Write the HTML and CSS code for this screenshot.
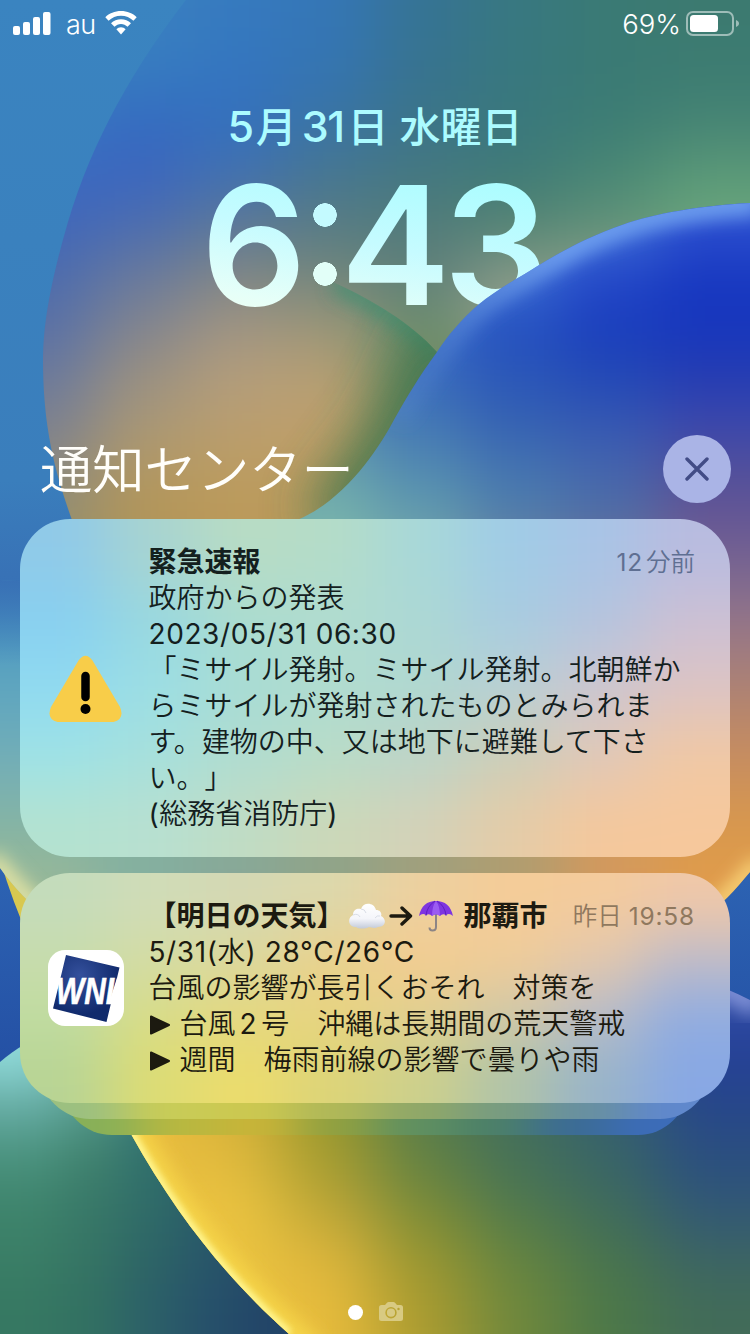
FILE: index.html
```html
<!DOCTYPE html>
<html lang="ja">
<head>
<meta charset="utf-8">
<title>通知センター</title>
<link rel="stylesheet" href="styles.css">
</head>
<body>
<main class="screen">
  <svg class="wallpaper wallpaper-back" viewBox="0 0 750 1334" aria-hidden="true">
    <defs>
      <filter id="glow" x="-30%" y="-30%" width="160%" height="160%"><feGaussianBlur stdDeviation="9"/></filter>
      <filter id="glow-wide" x="-60%" y="-60%" width="220%" height="220%"><feGaussianBlur stdDeviation="26"/></filter>
      <linearGradient id="sky" x1="0" y1="0" x2="0" y2="1">
        <stop offset="0" stop-color="#3a84c0"/><stop offset=".36" stop-color="#3a7ebc"/><stop offset=".43" stop-color="#3872b6"/><stop offset=".66" stop-color="#2c62b2"/><stop offset=".8" stop-color="#2450a4"/>
      </linearGradient>
      <clipPath id="upper"><path d="M186 0C135 66 92 140 68 222C50 284 43 325 43 360C43 420 52 465 72 520L120 640H750V0Z"/></clipPath>
      <clipPath id="disc"><path d="M0 250H270C300 262 320 274 335 283C372 300 410 322 437 352L445 700H0Z"/></clipPath>
      <clipPath id="gold"><path d="M0 860C30 960 80 1040 131 1134C180 1222 232 1283 289 1334H750V1000C720 984 680 972 640 960L500 860Z"/></clipPath>
      <clipPath id="teal"><path d="M0 1062C30 1036 70 1020 110 1020L300 1334H0Z"/></clipPath>
    </defs>
    <rect width="750" height="1334" fill="url(#sky)"/>
    <g clip-path="url(#upper)">
      <g data-mesh="upper"></g>
      <g clip-path="url(#disc)">
        <path d="M335 283C372 300 410 322 437 352" fill="none" stroke="#429070" stroke-width="20" filter="url(#glow)" opacity=".75"/>
        <path d="M450 330L405 430L330 530" fill="none" stroke="#34724c" stroke-width="64" filter="url(#glow-wide)" opacity=".8"/>
      </g>
    </g>
    <g clip-path="url(#teal)">
      <g data-mesh="teal"></g>
    </g>
    <g clip-path="url(#gold)">
      <g data-mesh="gold"></g>
      <path d="M60 1006C84 1050 108 1092 131 1134C180 1222 232 1283 289 1334L310 1352" fill="none" stroke="#f6d548" stroke-width="32" filter="url(#glow)"/>
      <path d="M60 1006C84 1050 108 1092 131 1134C180 1222 232 1283 289 1334" fill="none" stroke="#fff690" stroke-width="9" class="edge"/>
      <path d="M640 950C690 970 725 985 760 1006" fill="none" stroke="#7f90d6" stroke-width="26" filter="url(#glow)"/>
    </g>
  </svg>

  <svg class="wallpaper wallpaper-front" viewBox="0 0 750 1334" aria-hidden="true">
    <defs>
      <clipPath id="wave"><path d="M750 203C700 206 655 213 622 225C590 236 560 252 536 267C515 280 495 291 478 305C462 319 448 335 437 352C418 378 407 397 395 418C378 450 345 500 297 520C200 600 100 585 0 580V868C14 888 30 904 50 920H700C722 905 735 890 750 872Z"/></clipPath>
      <linearGradient id="fade" x1="0" y1="0" x2="0" y2="1"><stop offset="0" stop-color="#3870b5"/><stop offset="1" stop-color="#3a74b8" stop-opacity="0"/></linearGradient>
      <linearGradient id="rim" gradientUnits="userSpaceOnUse" x1="430" y1="0" x2="560" y2="0"><stop offset="0" stop-color="#6c9ce0" stop-opacity=".2"/><stop offset="1" stop-color="#6c9cee"/></linearGradient>
    </defs>
    <g clip-path="url(#wave)">
      <g data-mesh="wave"></g>
      <rect x="0" y="575" width="22" height="90" fill="url(#fade)"/>
      <path d="M760 202C700 206 655 213 622 225C590 236 560 252 536 267C515 280 495 291 478 305C462 319 448 335 437 352L396 418" fill="none" stroke="url(#rim)" stroke-width="28" filter="url(#glow)"/>
      <path d="M-10 858C14 888 30 904 50 920" fill="none" stroke="#e4e4a4" stroke-width="20" filter="url(#glow)"/>
      <path d="M700 920C722 905 735 890 760 862" fill="none" stroke="#ffe080" stroke-width="14" filter="url(#glow)"/>
    </g>
  </svg>

  <header class="status">
    <div class="status-group">
      <svg class="signal" viewBox="0 0 38 24"><rect x="0" y="14" width="7" height="9" rx="2"/><rect x="10" y="10" width="7" height="13" rx="2"/><rect x="20" y="5" width="7" height="18" rx="2"/><rect x="30" y="0" width="7.500" height="23" rx="2"/></svg>
      <span class="carrier">au</span>
      <svg class="wifi" viewBox="0 0 32 24"><path d="M16 0C9.800 0 4.200 2.300.3 6.200L3.600 9.700C6.800 6.600 11.200 4.700 16 4.700S25.200 6.600 28.400 9.700L31.700 6.200C27.800 2.300 22.200 0 16 0Z"/><path d="M16 8.200C12.200 8.200 8.600 9.700 6 12.200L9.500 15.800C11.200 14.100 13.500 13 16 13S20.800 14.100 22.500 15.800L26 12.200C23.400 9.700 19.800 8.200 16 8.200Z"/><path d="M16 16.300C14.200 16.300 12.500 17 11.400 18.300L16 23.500L20.600 18.300C19.500 17 17.800 16.300 16 16.300Z"/></svg>
    </div>
    <div class="status-group">
      <span class="percent">69%</span>
      <svg class="battery" viewBox="0 0 54 26"><rect x="1" y="1" width="46" height="23" rx="6" class="battery-case"/><rect x="4" y="4" width="28" height="17" rx="3.500"/><path d="M50 9C54 10.500 54 14.500 50 16Z" opacity=".5"/></svg>
    </div>
  </header>

  <p class="date"><span class="num five">5</span>月<span class="num day">31</span>日 水曜日</p>
  <div class="clock"><span class="d6">6</span><i class="colon"></i><span class="d4">4</span><span class="d3">3</span></div>

  <div class="heading">
    <h1>通知センター</h1>
    <button class="close" aria-label="閉じる"><svg viewBox="0 0 24 24"><path d="M2 2L22 22M22 2L2 22"/></svg></button>
  </div>

  <section class="list">
    <article class="card alert">
      <svg class="tint" viewBox="0 0 710 338" preserveAspectRatio="none"><g data-mesh="alert"></g></svg>
      <svg class="warn" viewBox="0 0 74 68"><path d="M29.500 5.500Q36.500-4 43.500 5.500L71 52Q76 64 64.500 67H8.500Q-3 64 2 52Z" fill="#f8cd49"/><path d="M36.500 21V42" stroke="#000" stroke-width="8.500" stroke-linecap="round"/><circle cx="36.500" cy="54" r="5" fill="#000"/></svg>
      <div class="body">
        <div class="row"><h2>緊急速報</h2><time><span class="lat">12</span><span class="gap"></span>分前</time></div>
        <p>政府からの発表<br><span class="lat">2023/05/31 06:30</span><br>「ミサイル発射。ミサイル発射。北朝鮮か<br>らミサイルが発射されたものとみられま<br>す。建物の中、又は地下に避難して下さ<br>い。」<br><span class="lat">(</span>総務省消防庁<span class="lat">)</span></p>
      </div>
    </article>

    <div class="stack">
      <div class="layer layer-3"><svg class="tint" viewBox="0 0 626 80" preserveAspectRatio="none"><g data-mesh="third"></g></svg></div>
      <div class="layer layer-2"><svg class="tint" viewBox="0 0 670 80" preserveAspectRatio="none"><g data-mesh="second"></g></svg></div>
      <article class="card weather">
        <svg class="tint" viewBox="0 0 710 230" preserveAspectRatio="none"><g data-mesh="weather"></g></svg>
        <svg class="wni" viewBox="0 0 76 76"><defs><radialGradient id="navy" cx=".4" cy=".3" r=".6"><stop offset="0" stop-color="#34509c"/><stop offset="1" stop-color="#102a6c"/></radialGradient></defs><rect width="76" height="76" rx="17" fill="#fff"/><path d="M18 5L71.500 17.500L69 28L58.500 72L5 58.500L12 30Z" fill="url(#navy)"/><path d="M73 28H69L60.500 54H66Z" fill="#fff"/><text x="8" y="54" textLength="58" lengthAdjust="spacingAndGlyphs">WNI</text></svg>
        <div class="body">
          <div class="row"><h2>【明日の天気】
            <svg class="cloud" viewBox="0 0 36 28"><defs><linearGradient id="puff" x1="0" y1="0" x2="0" y2="1"><stop offset="0" stop-color="#fff"/><stop offset=".6" stop-color="#f4f5fa"/><stop offset="1" stop-color="#c3cbd9"/></linearGradient></defs><path d="M7 25C-1 25-2 16 4 13C4 7 9 6 12 7C14 0 25 0 27 8C32 8 33 12 32 14C38 17 37 25 29 25C25 27 22 25 20 25C16 27 10 27 7 25Z" fill="url(#puff)"/><path d="M4 13Q9 11 11 15M12 7Q16 7 17 11M31 14Q28 13 26 16" fill="none" stroke="#d9dde6" stroke-width="1"/></svg><svg class="arrow" viewBox="0 0 24 20"><path d="M2 10H21M13 2L21.500 10L13 18"/></svg><svg class="umbrella" viewBox="0 0 36 34"><path d="M18 14V28Q18 31.500 14.500 31.500Q11.500 31.500 11.500 28.500" fill="none" stroke="#8c8585" stroke-width="2"/><path d="M1 17C3 7 9 2 18 2S33 7 35 17Q31 13.500 28 16.500Q25 14 22 17Q18 13.500 14 17Q11 14 8 16.500Q5 13.500 1 17Z" fill="#7e35e0"/><path d="M14 17Q14 7 18 2Q22 7 22 17Q18 13.500 14 17Z" fill="#9b5cf2"/><path d="M8 16.500Q9 7 17 2M28 16.500Q27 7 19 2" fill="none" stroke="#5d1fc0" stroke-width="1"/></svg>
            <span class="city">那覇市</span></h2><time>昨日 <span class="lat">19:58</span></time></div>
          <p><span class="lat">5/31(</span>水<span class="lat">) 28°C/26°C</span><br>台風の影響が長引くおそれ　対策を<br><svg class="tri" viewBox="0 0 22 20"><path d="M2 1.500L20 10L2 18.500Z"/></svg>台風<span class="lat two">2</span>号　沖縄は長期間の荒天警戒<br><svg class="tri" viewBox="0 0 22 20"><path d="M2 1.500L20 10L2 18.500Z"/></svg>週間　梅雨前線の影響で曇りや雨</p>
        </div>
      </article>
    </div>
  </section>

  <footer class="pager">
    <span class="dot"></span>
    <svg class="camera" viewBox="0 0 24 20"><path fill-rule="evenodd" d="M2.500 3H6L8 .8Q8.600 0 9.500 0H14.500Q15.400 0 16 .8L18 3H21.500Q24 3 24 5.500V16.500Q24 19 21.500 19H2.500Q0 19 0 16.500V5.500Q0 3 2.500 3ZM12 5A5.700 5.700 0 1 0 12 16.400A5.700 5.700 0 1 0 12 5ZM12 6.600A4.100 4.100 0 1 1 12 14.800A4.100 4.100 0 1 1 12 6.600ZM19.500 5.800A1.200 1.200 0 1 0 19.500 8.200A1.200 1.200 0 1 0 19.500 5.800Z"/></svg>
  </footer>
</main>
<script src="mesh.js"></script>
</body>
</html>
```
FILE: styles.css
```css
* { box-sizing: border-box; margin: 0; padding: 0; }
body { background: #2f68b2; }
.screen {
  position: relative;
  width: 750px;
  height: 1334px;
  overflow: hidden;
  display: flex;
  flex-direction: column;
  font-family: Inter, "Noto Sans CJK JP", sans-serif;
  text-spacing-trim: space-all;
  color: #14201e;
}
.wallpaper { position: absolute; inset: 0; width: 750px; height: 1334px; }
.wallpaper-front { z-index: 2; }
.edge { filter: blur(3px); }

.status {
  position: relative;
  z-index: 3;
  height: 48px;
  padding: 0 10px 0 13px;
  display: flex;
  justify-content: space-between;
  align-items: center;
  color: #fff;
  font-size: 28px;
  font-weight: 300;
}
.status svg { fill: #fff; display: block; }
.status-group { display: flex; align-items: center; }
.signal { width: 38px; height: 24px; }
.carrier { margin-left: 15px; font-size: 27px; font-weight: 350; letter-spacing: -.5px; }
.wifi { width: 32px; height: 24px; margin-left: 9px; margin-top: -2px; }
.percent { font-size: 27.5px; font-weight: 350; }
.battery { width: 54px; height: 26px; margin-left: 5px; }
.status .battery-case { fill: none; stroke: #fff; stroke-opacity: .5; stroke-width: 2; }

.date {
  position: relative;
  z-index: 1;
  height: 60px;
  margin-top: 49px;
  line-height: 60px;
  text-align: center;
  font-size: 41px;
  font-weight: 500;
  color: #acfbff;
  white-space: nowrap;
}
.num { font-size: 43px; font-weight: 450; line-height: 1; letter-spacing: -1.5px; }
.five { margin-right: 3px; }
.day { margin: 0 4px 0 5px; }

.clock {
  position: relative;
  z-index: 1;
  height: 160px;
  margin-top: 8px;
  padding-left: 201px;
  display: flex;
  align-items: center;
  font-size: 165px;
  font-weight: 600;
  line-height: 160px;
  background: linear-gradient(190deg, #a6fdff 15%, #c6fbff 50%, #e6fff8 75%, #f8ffe8 95%);
  -webkit-background-clip: text;
  background-clip: text;
  color: transparent;
}
.colon {
  width: 26px;
  height: 84px;
  margin-left: 4px;
  background: radial-gradient(circle at 14px 12px, #c4faff 11.500px, transparent 12px), radial-gradient(circle at 14px 71px, #e2fff8 11.500px, transparent 12px);
}
.d4 { margin-left: 4px; }
.d3 { margin-left: -7px; }

.heading {
  position: relative;
  z-index: 3;
  display: flex;
  align-items: center;
  justify-content: space-between;
  height: 68px;
  margin-top: 110px;
  padding: 0 19px 0 40px;
}
.heading h1 { font-size: 52.300px; font-weight: 350; line-height: 68px; padding-top: 1px; color: #fffefa; white-space: nowrap; }
.close {
  width: 68px;
  height: 68px;
  border: 0;
  border-radius: 50%;
  background: #aab4e6;
  display: grid;
  place-items: center;
}
.close svg { width: 24px; height: 24px; fill: none; stroke: #424c86; stroke-width: 3.4; stroke-linecap: round; }

.list {
  position: relative;
  z-index: 3;
  display: flex;
  flex-direction: column;
  gap: 16px;
  margin-top: 16px;
  padding: 0 20px;
}
.card {
  position: relative;
  border-radius: 50px;
  overflow: hidden;
  display: flex;
  align-items: center;
}
.alert { height: 338px; }
.weather { height: 230px; }
.tint { position: absolute; inset: 0; width: 100%; height: 100%; }
.warn { position: relative; width: 74px; height: 68px; margin-left: 29px; margin-top: 2px; flex: none; }
.wni { position: relative; width: 76px; height: 76px; margin-left: 28px; flex: none; }
.wni text { font: italic 700 36px "Liberation Sans", sans-serif; fill: #fff; stroke: #fff; stroke-width: .6px; }
.body { position: absolute; left: 128.5px; right: 35px; top: 24.5px; }
.row { display: flex; justify-content: space-between; height: 36px; line-height: 36px; }
.row h2 { display: flex; align-items: center; font-size: 28px; font-weight: 700; white-space: nowrap; }
.row time { font-size: 24.5px; font-weight: 350; line-height: 36px; color: #5f6f92; white-space: nowrap; }
.row time .lat { letter-spacing: .8px; }
.weather time { color: #8f785e; }
.gap { display: inline-block; width: 3px; }
.body p { font-size: 28px; font-weight: 350; line-height: 36px; white-space: nowrap; }
.lat { font-weight: 400; letter-spacing: .6px; }
.weather .body { color: #1c1a10; }
.cloud { width: 36px; height: 28px; margin-left: 4px; }
.arrow { width: 24px; height: 20px; margin-left: 4px; fill: none; stroke: #1c1a10; stroke-width: 3.4; stroke-linecap: round; stroke-linejoin: round; }
.umbrella { width: 36px; height: 34px; margin-left: 5px; }
.city { margin-left: 10px; }
.tri { width: 22px; height: 20px; margin-right: 9px; vertical-align: -1px; fill: #1c1a10; stroke: #1c1a10; stroke-width: 2; stroke-linejoin: round; }
.two { margin: 0 4px; }

.stack { position: relative; }
.layer { position: absolute; height: 80px; border-radius: 0 0 50px 50px; overflow: hidden; }
.layer-2 { left: 20px; right: 20px; bottom: -16px; }
.layer-3 { left: 42px; right: 42px; bottom: -32px; }

.pager {
  position: relative;
  z-index: 3;
  display: flex;
  align-items: center;
  justify-content: center;
  gap: 16px;
  margin-top: 199px;
}
.dot { width: 15px; height: 15px; border-radius: 50%; background: #fff; }
.camera { width: 24px; height: 20px; fill: #d8ca82; }
```
FILE: mesh.js
```js
// Each mesh is a grid of colours, blurred into a smooth gradient.
const meshes = {
  upper: { x: 0, y: 0, w: 750, h: 550, blur: 34, rows: [
    '3a84c0 3a80c0 367abf 3576b6 367394 387880 3a7a74 3c7a70',
    '3a80c0 367cc0 3474c0 3574b0 37738e 38787e 3a7a74 3c7c72',
    '3a78c0 3468c0 3470be 3a74a4 3c7488 3a787c 3c7c74 468474',
    '3a68c0 3c66c0 4270b0 467690 447880 3f7a78 4a8874 5c9a78',
    '4066bc 4a6cb0 5c7898 587c84 507c78 528470 5c9078 68a87c',
    '4c6cac 6a7a9c 808684 70867c 607c7c 84988a 90a088 80a080',
    '586fa8 808490 a09484 9c9678 68906c a8a890 90a088 80a080',
    '6a7a9c 9a9080 b49e7c b8a074 708860 508060 508060 508060',
    '7c8090 a8987a ba9e70 bfa06c 8c905c 4a7c58 508060 508060',
    '8c8a80 b4985e bc9c60 bd9c60 8c8c58 507c58 508060 508060',
    '94906c b09458 bb9958 b89a5c 8c8c58 607c58 508060 508060' ] },
  wave: { x: 0, y: 200, w: 750, h: 700, blur: 28, rows: [
    '3a78c0 3a78c0 3a78c0 4a80d8 5080e0 4c80de 4070d8 2c50d0',
    '3a78c0 3a78c0 3a78c0 4a80d8 4a80d8 3c6cd4 2448c8 1838c0',
    '3a78c0 3a78c0 3a78c0 4a80d8 3a6cc8 2450c0 1a3ebe 1636be',
    '3a78c0 3a78c0 4a78c0 4a78c0 386abc 2a56b8 2248b6 243cb2',
    '3a78c0 3a78c0 4a90b0 5a90b0 4478b4 3662b2 3658b2 3c48ac',
    '3a78b8 3a78b8 66a4ac 6aa4ac 548cb0 4676b0 4666ac 545099',
    '3a78b8 3a78b8 70b0ac 78b4ac 66a0ac 5480a8 5270a4 685894',
    '3a78b8 70b0ac 78b4ac 80b8a8 80a0a8 8080a0 807090 7c6890',
    '4c98c0 70b0ac 78b4ac 80b8a8 80a0a8 8c8898 907a88 967688',
    '5ca4c0 70b0ac 78b4ac 80b8a8 80a8a0 909890 a08880 a88078',
    '68aabc 78b4ac 80b4ac 88b4a0 90a898 a0a088 b89078 bc8868',
    '78b0b4 80b4a8 88b0a0 90a898 a0a888 b0a078 c89868 cc905c',
    '84b4a4 84b0a0 88aa98 90a48a a0a080 b0a070 d09c60 d8984c',
    '98b898 84b0a0 88a898 90a488 a0a07c b09c70 d4985c e09c4c' ] },
  teal: { x: 0, y: 1030, w: 300, h: 304, blur: 24, rows: [
    '90dada 78b8b0 50988c 3a7878 30686c',
    '66aca4 569a8c 387878 2c6068 285868',
    '4a927e 40826e 30706c 28586a 265068',
    '3e846c 387868 306c68 285a68 244e68',
    '3a7e66 357464 2d6466 28566a 244868',
    '367862 327062 2c6068 26506a 224468' ] },
  gold: { x: 0, y: 860, w: 750, h: 474, blur: 34, rows: [
    'd8c850 d8c850 d8c850 b8b850 4868a0 2a62b0 2a62b0 2a62b0',
    'd8c850 d8c850 d8c850 b8b850 4868a0 3858b0 3858b0 4060b8',
    'e8c040 e8c040 d8b83c a0a038 608050 44705c 345890 3450a8',
    'ecc040 e8bc3c d8b23a 9c9c30 608050 44705c 345e74 243f98',
    'ecc040 ecbc3c d4b03a 98982c 587c4c 446e5c 345e72 26458c',
    'ecc040 ecc040 dcb63c a09a2e 5e8046 44705a 386468 2a4e80',
    'ecc040 ecc040 ecc440 b8a436 788a38 4e784e 3e6a5e 305678',
    'ecc040 ecc040 ecc440 dcb43c 989630 648440 48744e 3c6464',
    'ecc040 ecc040 ecc440 e8bc3c ac9c30 70883c 4c7848 426c58' ] },
  alert: { x: 0, y: 0, w: 710, h: 338, blur: 30, rows: [
    '90cae8 a8d4d0 b8dcc4 b4dcc8 a8d8d8 a0cce6 a8c4e6 b8bce0',
    '88d0f0 98d8e0 aadcd0 b0dcd0 acd8d4 a8cce0 b4c4de ccc0d4',
    '90daf0 9cdee4 a8dcd4 b0dcd0 b0d8d0 b8d0d4 ccc6d0 dcc4c4',
    '9ee2e6 a6e0dc b0dcd0 b8dcc8 bcd4c8 ccceb8 e0c8b8 f0c8a4',
    'b4e2d0 b8e0d0 c0dcc4 ccd8b8 d4d2b8 e4cca8 f4c89c f6c89c' ] },
  weather: { x: 0, y: 0, w: 710, h: 230, blur: 28, rows: [
    'c4dcbc d0dcb8 d4d8b4 dcd8ac ecd0a0 f4cc98 f4cb9c f0c8a8',
    'c8dcac d4dca4 dcd89c ead08c f4cc90 f0cc98 e4c8ac c0bcc8',
    'c0dca0 d8dc88 e4d880 e8d480 e0d090 d0c8a8 b8bcc8 90ace0',
    'b8d494 dcdc74 ecdc6c dcd478 ccd08c b0c4a8 98b4c8 88a8e4' ] },
  second: { x: 0, y: 0, w: 670, h: 80, blur: 24, rows: [
    '9cc080 c8cc58 ccc850 b0b858 90a868 789c80 6890a0 6088cc' ] },
  third: { x: 0, y: 0, w: 626, h: 80, blur: 24, rows: [
    '88b058 b8b840 c8b438 90a040 609060 4c8068 3c6c94 3c6cb8' ] }
};

const NS = 'http://www.w3.org/2000/svg';
const make = (name, attrs) => {
  const node = document.createElementNS(NS, name);
  for (const key in attrs) node.setAttribute(key, attrs[key]);
  return node;
};

document.querySelectorAll('[data-mesh]').forEach(group => {
  const name = group.dataset.mesh;
  const m = meshes[name];
  const pad = 120;
  const filter = make('filter', {
    id: 'blur-' + name, filterUnits: 'userSpaceOnUse',
    x: m.x - pad, y: m.y - pad, width: m.w + 2 * pad, height: m.h + 2 * pad,
    'color-interpolation-filters': 'sRGB'
  });
  filter.append(make('feGaussianBlur', { stdDeviation: m.blur }));
  const cells = make('g', { filter: `url(#blur-${name})` });
  const rowCount = m.rows.length;
  m.rows.forEach((row, r) => {
    const colours = row.split(' ');
    const cw = m.w / colours.length, ch = m.h / rowCount;
    colours.forEach((c, i) => {
      const left = i === 0 ? m.x - pad : m.x + i * cw;
      const right = i === colours.length - 1 ? m.x + m.w + pad : m.x + (i + 1) * cw + 1;
      const top = r === 0 ? m.y - pad : m.y + r * ch;
      const bottom = r === rowCount - 1 ? m.y + m.h + pad : m.y + (r + 1) * ch + 1;
      cells.append(make('rect', { x: left, y: top, width: right - left, height: bottom - top, fill: '#' + c }));
    });
  });
  group.append(filter, cells);
});
```
